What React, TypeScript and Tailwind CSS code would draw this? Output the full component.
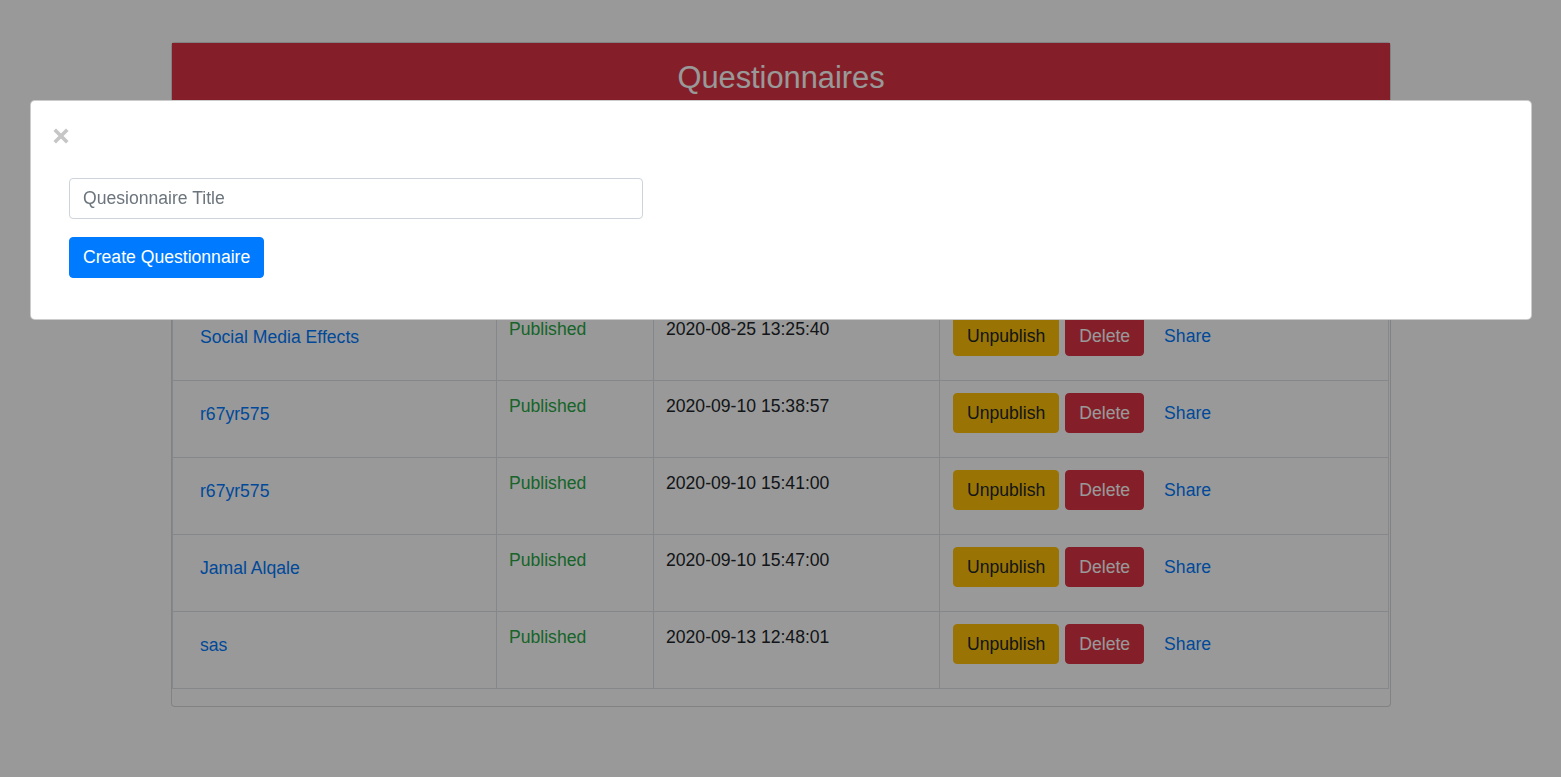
import React from 'react'

interface Questionnaire {
	id: number
	title: string
	status: string
	created: string
}

const rows: Questionnaire[] = [
	{ id: 2, title: 'Social Media Effects', status: 'Published', created: '2020-08-25 13:25:40' },
	{ id: 3, title: 'r67yr575', status: 'Published', created: '2020-09-10 15:38:57' },
	{ id: 4, title: 'r67yr575', status: 'Published', created: '2020-09-10 15:41:00' },
	{ id: 5, title: 'Jamal Alqale', status: 'Published', created: '2020-09-10 15:47:00' },
	{ id: 6, title: 'sas', status: 'Published', created: '2020-09-13 12:48:01' }
]

function QuestionnaireTable () {
	return (
		<div className="ml-[171px] mt-[42px] w-[1220px] rounded-[4px] border border-black/15 bg-white pb-[17px]">
			<div className="flex h-[71px] items-center justify-center bg-[#dc3545]">
				<h3 className="text-[30.8px] font-medium leading-[1.2] text-white">Questionnaires</h3>
			</div>
			<table className="w-[1217px] table-fixed border-collapse border border-[#dee2e6]">
				<thead>
					{/* header sits under the modal */}
					<tr className="h-[189px]">
						<th className="w-[324px] border border-[#dee2e6] px-3 pt-1 align-top text-left font-bold">Title</th>
						<th className="w-[157px] border border-[#dee2e6] px-3 pt-1 align-top text-left font-bold">Status</th>
						<th className="w-[286px] border border-[#dee2e6] px-3 pt-1 align-top text-left font-bold">Created</th>
						<th className="border border-[#dee2e6] px-3 pt-1 align-top text-left font-bold">Actions</th>
					</tr>
				</thead>
				<tbody>
					{rows.map( ( row ) => (
						<tr key={row.id} className="h-[77px]">
							<td className="border border-[#dee2e6] py-3 pl-[11px] pr-3 align-top">
								<a href="#" className="block px-4 py-2 text-[#007bff]">{row.title}</a>
							</td>
							<td className="border border-[#dee2e6] p-3 align-top text-[#28a745]">{row.status}</td>
							<td className="border border-[#dee2e6] p-3 align-top text-[#212529]">{row.created}</td>
							<td className="border border-[#dee2e6] py-3 pl-[13px] pr-3 align-top">
								<div className="flex items-center">
									<button className="rounded-[4px] border border-[#ffc107] bg-[#ffc107] px-[13px] py-1.5 text-[#212529]">Unpublish</button>
									<button className="ml-[6px] rounded-[4px] border border-[#dc3545] bg-[#dc3545] px-[13px] py-1.5 text-white">Delete</button>
									<button className="ml-[8px] px-3 py-1.5 text-[#007bff]">Share</button>
								</div>
							</td>
						</tr>
					) )}
				</tbody>
			</table>
		</div>
	)
}

function CreateModal () {
	return (
		<div className="fixed left-[30px] top-[100px] h-[220px] w-[1502px] rounded-[5px] border border-black/20 bg-white">
			<button className="ml-[22px] mt-[27px] block h-[16px] w-[16px]" aria-label="close">
				<svg viewBox="0 0 16 16" width="16" height="16">
					<path d="M3 3 L13 13 M13 3 L3 13" stroke="#c6c6c6" strokeWidth="3.6" strokeLinecap="square" />
				</svg>
			</button>
			<div className="ml-[38px] mt-[34px]">
				<input
					type="text"
					placeholder="Quesionnaire Title"
					className="block h-[41px] w-[574px] rounded-[4px] border border-[#ced4da] pl-[13px] pr-3 text-[#495057] placeholder:text-[#6c757d] focus:outline-none"
				/>
				<button className="mt-[18px] h-[41px] rounded-[4px] border border-[#007bff] bg-[#007bff] px-[13px] text-white">
					Create Questionnaire
				</button>
			</div>
		</div>
	)
}

export default function App () {
	return (
		<div className="relative h-[777px] overflow-hidden bg-white text-[17.6px] leading-[1.5] text-[#212529]" style={{ fontFamily: '"Liberation Sans", Arial, sans-serif' }}>
			<QuestionnaireTable />
			<div className="fixed inset-0 bg-black/40"></div>
			<CreateModal />
		</div>
	)
}
